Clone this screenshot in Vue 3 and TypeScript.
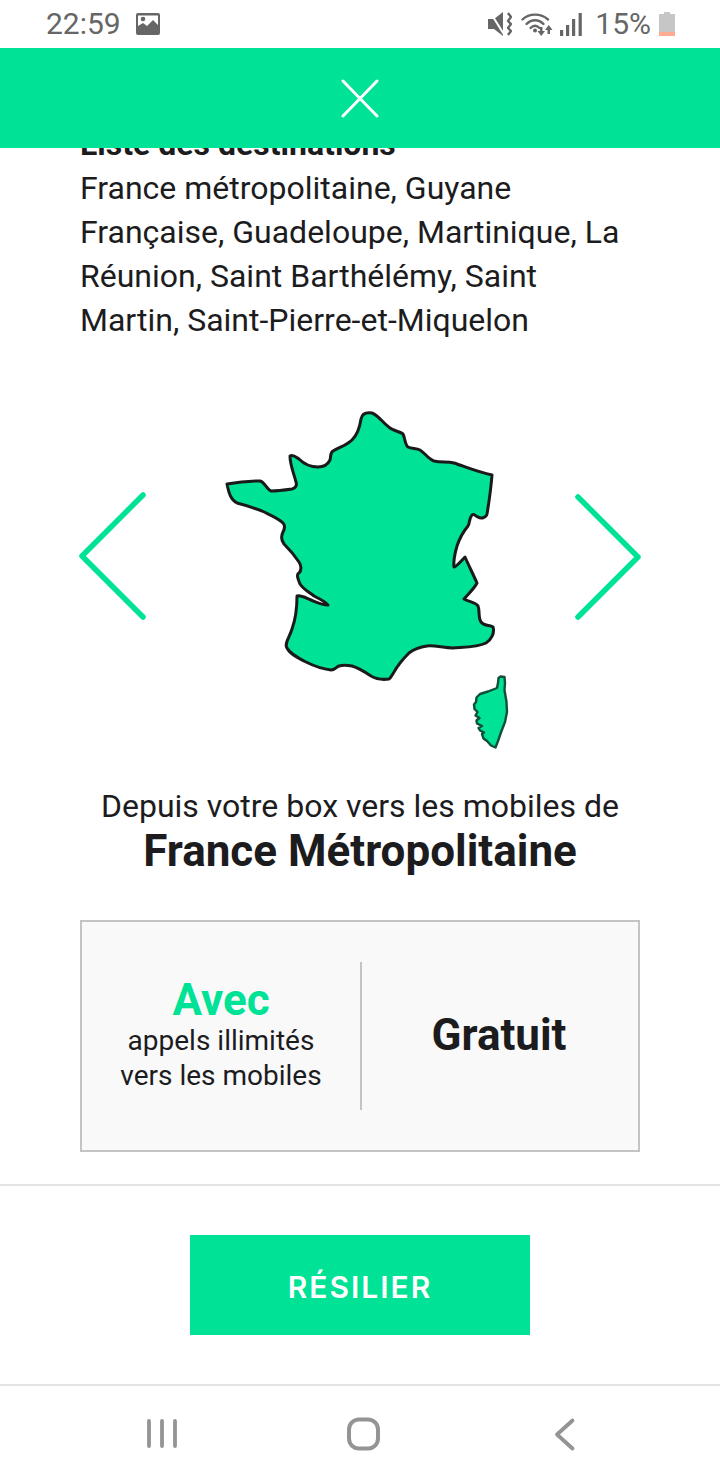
<script setup lang="ts">
const lines: string[] = [
  'France métropolitaine, Guyane',
  'Française, Guadeloupe, Martinique, La',
  'Réunion, Saint Barthélémy, Saint',
  'Martin, Saint-Pierre-et-Miquelon',
]
</script>

<template>
  <div class="page">
    <div class="status">
      <div class="status-left">
        <span class="time">22:59</span>
        <svg class="img-icon" width="24" height="22" viewBox="0 0 24 22">
          <path fill="#666" fill-rule="evenodd" d="M2 0h20a2 2 0 0 1 2 2v18a2 2 0 0 1-2 2H2a2 2 0 0 1-2-2V2a2 2 0 0 1 2-2zM2 2.500V13l5-3 4 3 6-6 5 5V2.500z" />
          <circle cx="7" cy="6" r="2.300" fill="#666" />
        </svg>
      </div>
      <div class="status-right">
        <svg width="25" height="24" viewBox="0 0 25 24">
          <path fill="#666" d="M1 7h6l9-7v24l-9-7H1z" />
          <path fill="none" stroke="#fff" stroke-width="2" d="M3 0l15 24" />
          <path fill="none" stroke="#666" stroke-width="2.400" stroke-linejoin="round" d="M21 1l3 4-3 4 3 3-3 4 3 3-3 4" />
        </svg>
        <svg class="wifi" width="32" height="24" viewBox="0 0 32 24">
          <g fill="none" stroke="#666" stroke-width="2.400" stroke-linecap="round">
            <path d="M1.500 7.500C8 1 20 1 27 7.500" />
            <path d="M5.500 12c5-5 12-5 17 0" />
            <path d="M9.500 16c3-3 6-3 9 0" />
          </g>
          <circle cx="14" cy="18.500" r="2" fill="#666" />
          <path fill="#666" d="M16.500 19h2.500v-4h2.500v4H24l-3.750 5zM24 18h2.500v4H29v-4h2.500l-3.750-5z" />
        </svg>
        <svg class="signal" width="22" height="23" viewBox="0 0 22 23">
          <rect x="0" y="17" width="3.200" height="6" fill="#666" />
          <rect x="6" y="12" width="3.200" height="11" fill="#666" />
          <rect x="12" y="6" width="3.200" height="17" fill="#666" />
          <rect x="18.600" y="0" width="3.200" height="23" fill="#666" />
        </svg>
        <span class="pct">15%</span>
        <svg class="battery" width="16" height="24" viewBox="0 0 16 24">
          <path fill="#c6c6c6" d="M5 0h6v2h5v18H0V2h5z" />
          <rect x="0" y="20" width="16" height="4" fill="#ffab91" />
        </svg>
      </div>
    </div>

    <header class="topbar">
      <svg width="40" height="39" viewBox="0 0 40 39">
        <path fill="none" stroke="#fff" stroke-width="3" stroke-linecap="round" d="M3 2l34 35M37 2L3 37" />
      </svg>
    </header>

    <section class="destinations">
      <h2>Liste des destinations</h2>
      <p v-for="line in lines" :key="line">{{ line }}</p>
    </section>

    <div class="carousel">
      <svg class="arrow" width="70" height="140" viewBox="0 0 70 140">
        <path fill="none" stroke="#00e296" stroke-width="5.500" stroke-linecap="round" stroke-linejoin="round" d="M65 9L4 70l61 61" />
      </svg>
      <svg class="map" width="300" height="360" viewBox="215 400 300 360">
        <g fill="#00e296" stroke="#1a1a1a" stroke-width="3" stroke-linejoin="round">
          <path d="M227 484C238 482 250 481 260 481C265 482 267 490 271 491C278 491 285 490 292 489C296 488 297 485 296 482C294 474 290 465 290 456C293 454 296 457 299 459C304 464 310 467 318 467C325 467 328 464 330 460C331 456 330 453 333 451C340 447 347 445 352 440C358 434 360 426 361 419C362 414 366 412 372 413C378 415 384 424 390 428C394 431 401 432 403 434C405 438 405 445 408 447C412 449 416 448 420 450C425 453 428 459 434 461C441 463 447 461 454 463C466 467 478 472 492 475C491 488 489 502 487 514C486 518 481 519 478 517C475 516 474 513 472 515C469 518 470 523 468 526C463 532 459 540 457 546C455 553 453 560 454 567C456 567 460 562 465 557C469 566 473 574 477 583C474 589 468 594 464 599C469 602 476 602 478 606C480 611 478 618 481 622C484 626 490 625 493 627C495 633 491 640 486 643C478 647 466 647 453 648C444 648 434 645 427 646C420 647 414 649 409 653C403 659 398 665 394 672C392 675 391 678 389 679C382 680 376 679 371 676C365 672 359 668 352 666C347 665 342 665 339 666C336 667 335 670 331 670C323 669 314 666 306 662C298 658 290 654 287 648C284 644 290 636 292 629C296 618 297 606 297 596C301 595 306 598 311 600C316 602 322 605 328 605C326 602 320 599 314 596C309 592 304 590 300 584C298 579 296 574 299 573C302 570 301 565 299 562C295 556 289 549 284 544C281 540 281 536 283 532C285 528 285 525 283 523C278 518 270 515 262 511C254 508 245 505 237 503C231 500 229 494 227 484Z" />
          <path stroke="#0f4f3b" stroke-width="2.400" d="M500.500 676.500L504.500 677L505 683L504.500 690L506.500 702L507 712L505 722L501.500 731L498 741L495.500 747.500L491 745.500L487 741L483.500 738.500L482 734L484 732.500L480 730.500L478.500 728L482 726L477 723.500L476.500 720.500L479.500 718L475.500 715.500L477.500 712L474.500 709L474 704.500L476 702L476.500 697.500L480 694L488 691.500L497 688L498 683L498.500 678Z" />
        </g>
      </svg>
      <svg class="arrow" width="70" height="140" viewBox="0 0 70 140">
        <path fill="none" stroke="#00e296" stroke-width="5.500" stroke-linecap="round" stroke-linejoin="round" d="M6 11l60 60-60 60" />
      </svg>
    </div>

    <p class="lead">Depuis votre box vers les mobiles de</p>
    <h1 class="country">France Métropolitaine</h1>

    <div class="rate">
      <div class="cell left">
        <div class="avec">Avec</div>
        <div class="small">appels illimités</div>
        <div class="small">vers les mobiles</div>
      </div>
      <div class="sep"></div>
      <div class="cell">
        <div class="free">Gratuit</div>
      </div>
    </div>

    <div class="rule first"></div>

    <div class="action">
      <button class="cancel" type="button">RÉSILIER</button>
    </div>

    <div class="rule second"></div>

    <nav class="nav">
      <svg width="40" height="40" viewBox="0 0 40 40">
        <path fill="none" stroke="#949494" stroke-width="3.800" stroke-linecap="round" d="M7 7v25M20 7v25M33 7v25" />
      </svg>
      <svg width="40" height="40" viewBox="0 0 40 40">
        <rect x="5" y="5.500" width="29" height="29" rx="10" fill="none" stroke="#949494" stroke-width="4" />
      </svg>
      <svg width="40" height="40" viewBox="0 0 40 40">
        <path fill="none" stroke="#949494" stroke-width="3.800" stroke-linecap="round" stroke-linejoin="round" d="M26.500 6.500L11 20.500l15.500 14" />
      </svg>
    </nav>
  </div>
</template>

<style>
html, body { margin: 0; background: #fff; }
</style>

<style scoped>
.page {
  width: 720px;
  height: 1480px;
  overflow: hidden;
  background: #fff;
  font-family: Roboto, "Liberation Sans", sans-serif;
  color: #1c1c1e;
}
.status {
  height: 48px;
  display: flex;
  justify-content: space-between;
  align-items: center;
  padding: 0 45px 0 46px;
  box-sizing: border-box;
  color: #666;
}
.status-left, .status-right { display: flex; align-items: center; }
.time { font-size: 30px; line-height: 48px; }
.img-icon { margin-left: 15px; }
.wifi { margin-left: 9px; }
.signal { margin-left: 7px; }
.pct { font-size: 30px; line-height: 48px; margin-left: 13px; }
.battery { margin-left: 8px; }
.topbar {
  position: relative;
  z-index: 1;
  height: 100px;
  background: #00e296;
  display: flex;
  align-items: center;
  justify-content: center;
}
.destinations {
  margin-top: -26px;
  padding: 0 80px;
  font-size: 32px;
  line-height: 44px;
}
.destinations h2 { margin: 0; font-size: 32px; font-weight: 700; line-height: 44px; }
.destinations p { margin: 0; white-space: nowrap; }
.carousel {
  margin-top: 58px;
  height: 360px;
  padding: 0 78px;
  display: flex;
  justify-content: space-between;
  align-items: flex-start;
}
.map { margin-left: 10px; }
.arrow { margin-top: 86px; filter: blur(0.7px); }
.lead {
  margin: 26px 0 0;
  text-align: center;
  font-size: 32px;
  line-height: 40px;
}
.country {
  margin: 0;
  text-align: center;
  font-size: 44px;
  line-height: 50px;
  font-weight: 700;
}
.rate {
  margin: 44px 80px 0;
  height: 232px;
  box-sizing: border-box;
  border: 2px solid #c4c4c4;
  background: #f9f9f9;
  display: flex;
  align-items: center;
}
.cell {
  flex: 1;
  text-align: center;
}
.cell.left { flex: 0 0 278px; margin-top: -2px; }
.sep { width: 2px; height: 148px; background: #c4c4c4; }
.avec { color: #00e296; font-size: 44px; font-weight: 700; line-height: 46px; }
.small { font-size: 28px; line-height: 35px; }
.free { font-size: 44px; font-weight: 700; line-height: 50px; margin: -2px 2px 0 0; }
.rule { height: 2px; background: #e4e4e4; }
.rule.first { margin-top: 32px; }
.rule.second { margin-top: 49px; }
.action { margin-top: 49px; display: flex; justify-content: center; }
.cancel {
  width: 340px;
  height: 100px;
  border: 0;
  background: #00e296;
  color: #fff;
  font-family: Inter, Roboto, sans-serif;
  font-size: 30px;
  font-weight: 600;
  letter-spacing: 2px;
  padding: 4px 0 0;
}
.nav {
  height: 93px;
  box-sizing: border-box;
  padding: 28px 0 0 61px;
  display: grid;
  grid-template-columns: repeat(3, 202px);
  justify-items: center;
  align-items: start;
}
</style>
